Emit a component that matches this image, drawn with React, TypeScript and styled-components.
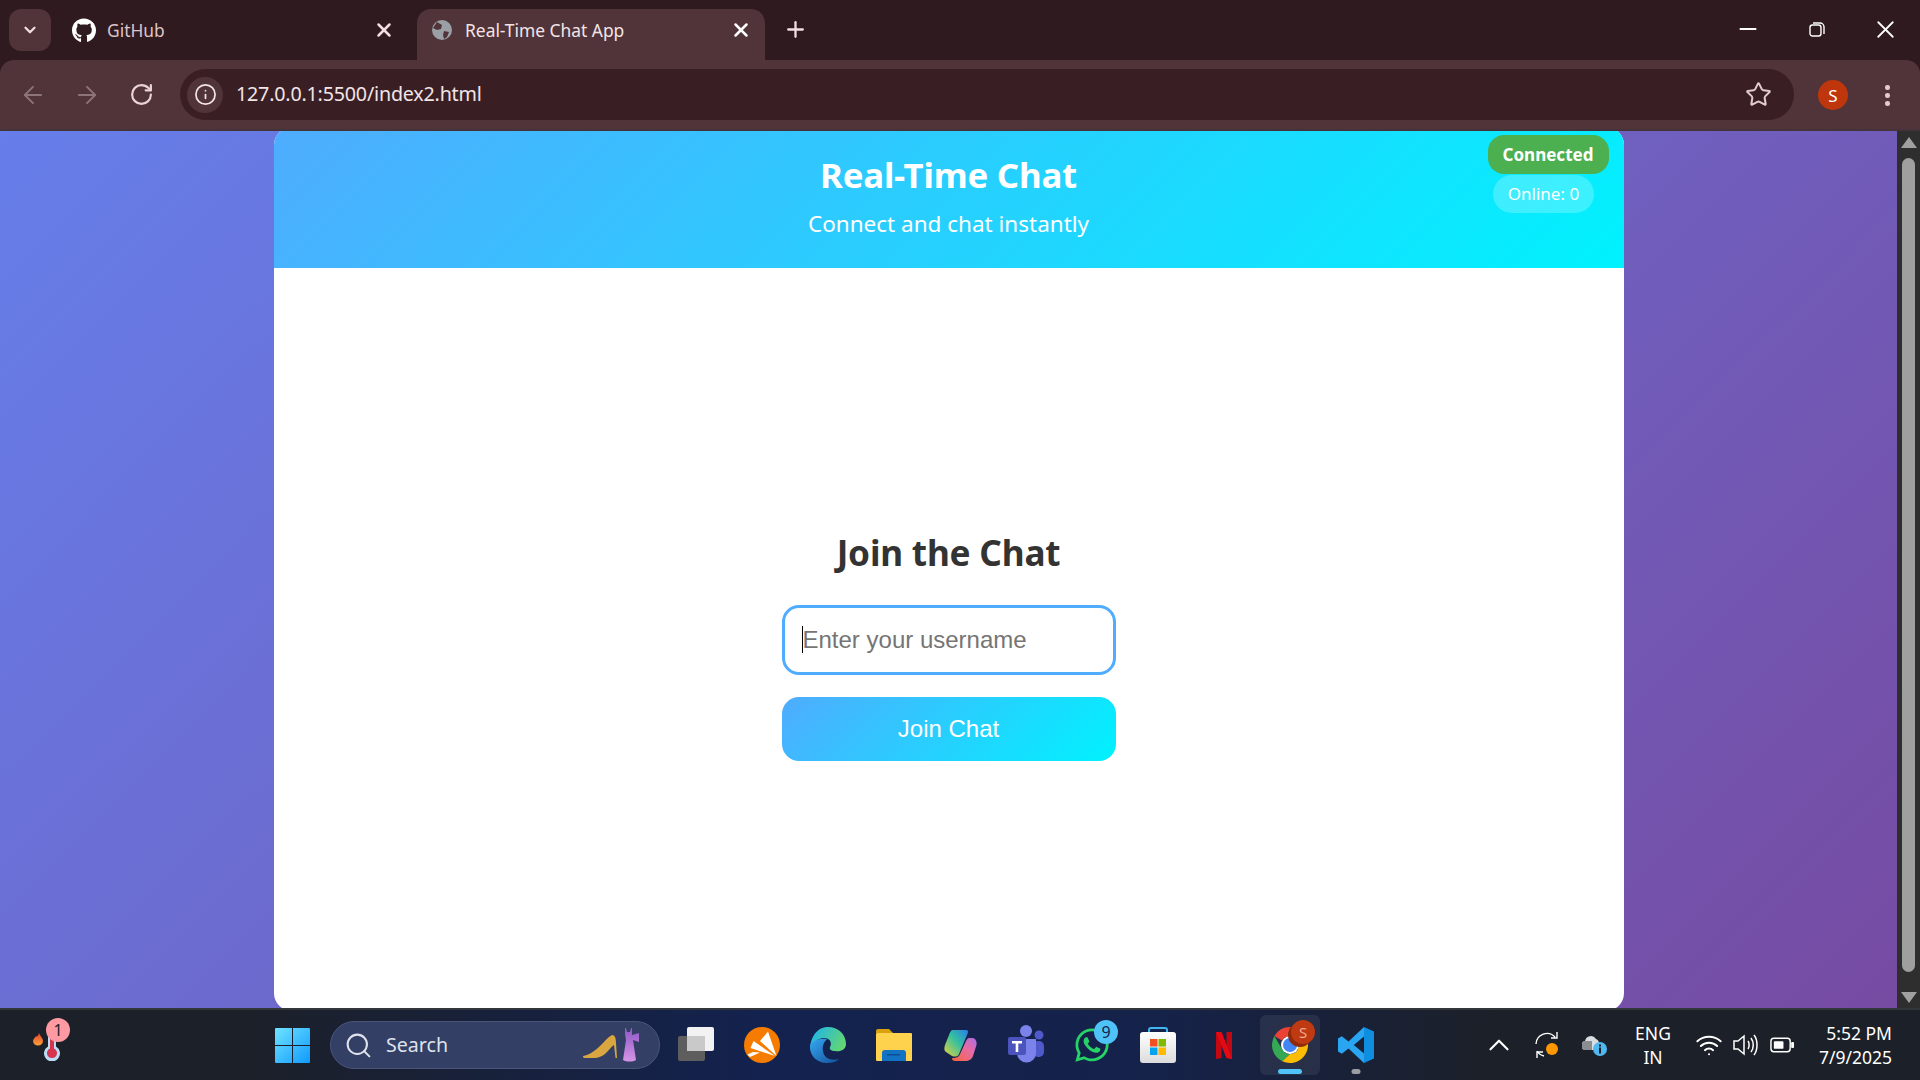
import React from "react";
import styled, { createGlobalStyle } from "styled-components";
import { ArrowLeft, ArrowRight, RotateCw, Info, Star, X, Plus, ChevronDown, ChevronUp, Search, Wifi, Minus } from "lucide-react";
import { FaGithub, FaWhatsapp } from "react-icons/fa";

const Global = createGlobalStyle`
  html, body { margin: 0; padding: 0; height: 100%; overflow: hidden; }
  body { font-family: "Noto Sans", "Open Sans", sans-serif; }
  * { box-sizing: border-box; }
`;

const Screen = styled.div`
  width: 1920px; height: 1080px; display: flex; flex-direction: column; overflow: hidden;
`;

/* Browser chrome */
const Chrome = styled.header`
  height: 131px; flex: none; background: #2f1a1f; display: flex; flex-direction: column;
`;
const TabStrip = styled.div`
  height: 60px; flex: none; display: flex; align-items: flex-start; padding: 9px 0 0 9px; position: relative;
`;
const TabSearch = styled.div`
  width: 42px; height: 42px; border-radius: 12px; background: #50343a; color: #f1dfe2;
  display: flex; align-items: center; justify-content: center; margin-right: 9px;
`;
const Tab = styled.div<{ $active?: boolean }>`
  width: ${p => (p.$active ? "348px" : "357px")}; height: 51px; display: flex; align-items: center;
  padding: 0 ${p => (p.$active ? "13px" : "22px")} 9px ${p => (p.$active ? "13px" : "12px")};
  font-size: 17.4px; position: relative;
  color: ${p => (p.$active ? "#f3e4e6" : "#dcc4c8")};
  background: ${p => (p.$active ? "#50343a" : "transparent")};
  border-radius: 14px 14px 0 0;
`;
const TabIcon = styled.span`
  width: 24px; height: 24px; margin-right: 11px; display: flex; align-items: center; justify-content: center; flex: none;
`;
const TabTitle = styled.span`flex: 1; white-space: nowrap;`;
const NewTab = styled.div`
  width: 40px; height: 40px; margin: 0 0 0 10px; color: #f1dfe2; display: flex; align-items: center; justify-content: center;
`;
const WindowControls = styled.div`
  margin-left: auto; display: flex; color: #fff; height: 42px; margin-top: -9px;
`;
const WindowButton = styled.div`
  width: 69px; height: 60px; display: flex; align-items: center; justify-content: center; padding-bottom: 2px;
`;
const Toolbar = styled.div`
  height: 71px; flex: none; background: #50343a; border-radius: 14px 14px 0 0; display: flex; align-items: flex-start;
  padding: 9px 0 0 17px; border-bottom: 2px solid #45333a;
`;
const NavButton = styled.div<{ $dim?: boolean }>`
  width: 32px; height: 51px; margin-right: 22px; display: flex; align-items: center; justify-content: center;
  color: ${p => (p.$dim ? "#8d7478" : "#e9d3d6")};
`;
const AddressBar = styled.div`
  width: 1614px; height: 51px; margin-left: 1px; border-radius: 26px; background: #391f24; display: flex; align-items: center; padding: 0 8px 0 7px;
`;
const InfoChip = styled.div`
  width: 36px; height: 36px; border-radius: 50%; background: #50343a; color: #f3e4e6; display: flex; align-items: center; justify-content: center; margin-right: 13px;
`;
const Url = styled.div`
  flex: 1; color: #f3e4e6; font-size: 19.7px; letter-spacing: -0.2px; padding-bottom: 2px;
`;
const StarSlot = styled.div`
  width: 34px; display: flex; justify-content: center; color: #e0cbce; margin-right: 11px;
`;
const Avatar = styled.div`
  width: 30px; height: 30px; border-radius: 50%; background: #bf360c; color: #fff; font-size: 17px;
  display: flex; align-items: center; justify-content: center; margin: 11px 0 0 24px;
`;
const MenuDots = styled.div`
  width: 6px; margin: 16px 0 0 37px; display: flex; flex-direction: column; gap: 3.5px;
`;
const Dot = styled.span`width: 4.5px; height: 4.5px; border-radius: 50%; background: #e6c9cf;`;

/* Viewport */
const Viewport = styled.div`
  flex: 1; min-height: 0; display: flex;
`;
const Page = styled.main`
  flex: 1; overflow: hidden; background: linear-gradient(135deg, #667eea 0%, #764ba2 100%); display: flex; justify-content: center; align-items: flex-start;
`;
const Card = styled.section`
  width: 1350px; height: 884px; margin-top: -4px; flex: none; background: #fff; border-radius: 18px; overflow: hidden; display: flex; flex-direction: column;
`;
const CardHeader = styled.div`
  height: 141px; flex: none; position: relative; color: #fff; text-align: center;
  background: linear-gradient(135deg, #4facfe 0%, #00f2fe 100%); padding-top: 27px;
`;
const Title = styled.h1`
  margin: 0; font-size: 34.8px; line-height: 42px; font-weight: 700; letter-spacing: -0.2px;
`;
const Subtitle = styled.p`
  margin: 12px 0 0; font-size: 22.5px; line-height: 32px; letter-spacing: 0;
`;
const StatusStack = styled.div`
  position: absolute; right: 15px; top: 8px; display: flex; flex-direction: column; align-items: center; gap: 1px;
`;
const ConnectedPill = styled.div`
  width: 121px; height: 39px; border-radius: 16px; background: #4caf50; color: #fff; font-weight: 700; font-size: 17px;
  display: flex; align-items: center; justify-content: center;
`;
const OnlinePill = styled.div`
  width: 101px; height: 38px; border-radius: 19px; background: rgba(255,255,255,.22); color: #fff; font-size: 17px;
  display: flex; align-items: center; justify-content: center; margin-right: 9px; padding-bottom: 1px;
`;
const JoinBody = styled.div`
  flex: 1; display: flex; flex-direction: column; align-items: center; padding-top: 260px;
`;
const JoinTitle = styled.h2`
  margin: 0 0 28px; font-size: 35.2px; line-height: 49px; font-weight: 700; color: #333; letter-spacing: -0.2px;
`;
const InputWrap = styled.div`
  position: relative; width: 334px; height: 70px; margin-bottom: 22px;
`;
const UserInput = styled.input`
  width: 100%; height: 100%; border: 3px solid #4facfe; border-radius: 17px; outline: none; padding: 0 18px;
  font-family: "Liberation Sans", Arial, sans-serif; font-size: 24px; background: #fff; caret-color: transparent;
  &::placeholder { color: #757575; opacity: 1; }
`;
const Caret = styled.span`
  position: absolute; left: 20px; top: 21px; width: 1px; height: 27px; background: #000;
`;
const JoinButton = styled.button`
  width: 334px; height: 64px; border: 0; border-radius: 17px; color: #fff;
  font-family: "Liberation Sans", Arial, sans-serif; font-size: 24px;
  background: linear-gradient(135deg, #4facfe 0%, #00f2fe 100%);
`;
const Scrollbar = styled.aside`
  width: 23px; flex: none; background: #2e2e2e; display: flex; flex-direction: column; align-items: center; padding: 6px 0 5px;
`;
const ScrollArrow = styled.span<{ $down?: boolean }>`
  width: 0; height: 0; border-left: 8px solid transparent; border-right: 8px solid transparent;
  ${p => (p.$down ? "border-top: 11px solid #a0a0a0; margin-top: 20px;" : "border-bottom: 11px solid #a0a0a0; margin-bottom: 10px;")}
`;
const ScrollThumb = styled.div`
  width: 13px; flex: 1; border-radius: 7px; background: #9f9f9f;
`;

/* Taskbar */
const Taskbar = styled.footer`
  height: 72px; flex: none; position: relative; display: flex; align-items: center; border-top: 2px solid #33363b;
  background: linear-gradient(90deg, #1c2028 0%, #1c2028 12%, #13224f 40%, #15224a 60%, #1c2028 78%, #1c2028 100%);
`;
const Widget = styled.div`
  width: 275px; flex: none; height: 70px; position: relative; padding: 0 0 0 33px; display: flex; align-items: center;
`;
const WidgetBadge = styled.span`
  position: absolute; left: 46px; top: 8px; width: 24px; height: 24px; border-radius: 50%; background: #ff9aa2; color: #222;
  font-size: 16px; display: flex; align-items: center; justify-content: center;
`;
const StartButton = styled.div`
  width: 35px; height: 35px; margin-right: 20px; flex: none;
`;
const SearchBox = styled.div`
  width: 330px; height: 48px; flex: none; border-radius: 24px; background: #343f66; border: 1px solid #4a5478; color: #dfe3ec;
  display: flex; align-items: center; padding: 0 19px 0 13px; font-size: 19.6px;
`;
const SearchText = styled.span`margin-left: 13px; flex: 1; padding-bottom: 2px;`;
const ShoeSlot = styled.span`
  display: flex; margin-right: 5px; padding-top: 2px;
`;
const AppRow = styled.div`
  display: flex; margin-left: 3px; height: 70px; align-items: center;
`;
const AppSlot = styled.div<{ $active?: boolean }>`
  width: 66px; height: 60px; position: relative; display: flex; align-items: center; justify-content: center;
  border-radius: 6px; ${p => p.$active && "background: rgba(255,255,255,.07); width: 60px; margin: 0 3px;"}
`;
const WhatsBadge = styled.span`
  position: absolute; right: 7px; top: 5px; width: 24px; height: 24px; border-radius: 50%; font-size: 16px;
  display: flex; align-items: center; justify-content: center; background: #4fc3f7; color: #15224a;
`;
const ChromeBadge = styled.span`
  position: absolute; right: 5px; top: 5px; width: 24px; height: 24px; border-radius: 50%; font-size: 15px;
  display: flex; align-items: center; justify-content: center; background: #bf3a12; color: #f2ab94;
  box-shadow: -3px 3px 0 #8e2a0a;
`;
const RunMark = styled.span<{ $wide?: boolean }>`
  position: absolute; bottom: 1px; left: 50%; transform: translateX(-50%); height: 5px; border-radius: 3px;
  width: ${p => (p.$wide ? "24px" : "9px")}; background: ${p => (p.$wide ? "#4fc3f7" : "#9a9da3")};
`;
const Tray = styled.div`
  position: absolute; right: 28px; top: 0; height: 70px; display: flex; align-items: center; color: #fff;
`;
const TraySlot = styled.div<{ $w: number; $gap?: number }>`
  width: ${p => p.$w}px; margin-left: ${p => p.$gap ?? 0}px; display: flex; justify-content: center; align-items: center; position: relative;
`;
const Lang = styled.div`
  width: 60px; text-align: center; font-size: 17.5px; line-height: 24px; margin: 0 9.5px 0 11px;
`;
const Clock = styled.div`
  width: 92px; text-align: right; font-size: 17.5px; line-height: 24px; margin-left: 2px;
`;

const Globe = () => (
  <svg width="22" height="22" viewBox="0 0 22 22">
    <circle cx="11" cy="11" r="10" fill="#9aa0a6" />
    <path d="M6 3l5 3-1 4-4 1-4-2zM13 12l5 1-2 5-3 2-1-4z" fill="#50343a" />
  </svg>
);
const WinLogo = () => (
  <StartButton>
    <svg width="35" height="35" viewBox="0 0 35 35">
      <defs>
        <linearGradient id="win" x1="0" y1="0" x2="1" y2="1">
          <stop offset="0" stopColor="#6fe3ff" />
          <stop offset="1" stopColor="#0f9aff" />
        </linearGradient>
      </defs>
      <path d="M1 0h16v17H0V1a1 1 0 011-1zM18 0h16a1 1 0 011 1v16H18zM0 18h17v17H1a1 1 0 01-1-1zM18 18h17v16a1 1 0 01-1 1H18z" fill="url(#win)" />
    </svg>
  </StartButton>
);
const Thermo = () => (
  <svg width="30" height="32" viewBox="0 0 30 32">
    <defs>
      <linearGradient id="flm" x1="0" y1="0" x2="0" y2="1">
        <stop offset="0" stopColor="#e8432c" />
        <stop offset="1" stopColor="#f9a13a" />
      </linearGradient>
    </defs>
    <path d="M6 4c1 3 4 5 4 8a5 4.500 0 01-10 0c0-2 2-3 3-5 1 1 1.500 1 3-3z" fill="url(#flm)" />
    <path d="M15 4h8v13.500a8 8 0 11-8 0z" fill="#bcdcf5" />
    <path d="M17 4h4v15.500a5 5 0 11-4 0z" fill="#d6334e" />
  </svg>
);
const Shoe = () => (
  <ShoeSlot>
    <svg width="34" height="23" viewBox="0 0 34 23">
      <path d="M0 21C6 20 12 16 17 11 21 7 25 2 29 0c3 0 4 3 4 8l1 15h-1.500L31 10c-2 1-4 4-7 7-4 4-8 6-14 6H2c-2 0-2-1-2-2z" fill="#d9a63f" />
    </svg>
  </ShoeSlot>
);
const Dress = () => (
  <svg width="18" height="35" viewBox="0 0 18 35">
    <defs>
      <linearGradient id="drs" x1="0" y1="0" x2="0" y2="1">
        <stop offset="0" stopColor="#8f58c8" />
        <stop offset="1" stopColor="#d595e6" />
      </linearGradient>
    </defs>
    <path d="M3 0h1l1 4h3l1-4h1v7l7-2v9l-6-2 3 20c-3 2-10 2-13 0l3-20-1-6z" fill="url(#drs)" />
  </svg>
);
const TaskView = () => (
  <svg width="36" height="36" viewBox="0 0 36 36">
    <rect x="0" y="9" width="27" height="25" rx="2" fill="#5e5e5e" />
    <rect x="9" y="0" width="27" height="24" rx="2" fill="#f2f2f2" />
    <rect x="9" y="9" width="18" height="15" fill="#c9c9c9" />
  </svg>
);
const SublimeLike = () => (
  <svg width="36" height="36" viewBox="0 0 36 36">
    <circle cx="18" cy="18" r="18" fill="#f57c00" />
    <path d="M24 4.500L16 14 32.500 29zM9.500 14L6.500 21 31 29zM3.500 27.500L6 30 16 25.500 9 25z" fill="#fff" />
  </svg>
);
const Edge = () => (
  <svg width="36" height="36" viewBox="0 0 36 36">
    <defs>
      <linearGradient id="edg" x1="0" y1="0" x2="1" y2="1">
        <stop offset="0" stopColor="#35a8f1" />
        <stop offset="1" stopColor="#14509c" />
      </linearGradient>
      <linearGradient id="edg2" x1="0" y1="0.3" x2="1" y2="0.7">
        <stop offset="0" stopColor="#1fb4e8" />
        <stop offset="1" stopColor="#66d86e" />
      </linearGradient>
    </defs>
    <path d="M18 0c10 0 18 7 18 17 0 6-6 8-11 7-4 0-6-2-5-4 2-3 1-9-6-9-6 0-13 5-14 13C0 10 7 0 18 0z" fill="url(#edg2)" />
    <path d="M0 20c0 9 7 16 17 16 5 0 9-1 12-4-7 2-15 0-16-8-1-5 1-9 4-12-8-1-17 2-17 8z" fill="url(#edg)" />
  </svg>
);
const Folder = () => (
  <svg width="36" height="32" viewBox="0 0 36 32">
    <path d="M0 2a2 2 0 012-2h11l4 4H0z" fill="#d8a10e" />
    <rect y="4" width="36" height="28" rx="1" fill="#ffd24d" />
    <path d="M6 32V24a3 3 0 013-3h18a3 3 0 013 3v8z" fill="#1273c4" />
    <rect x="11" y="25" width="13" height="1.500" fill="#0d4f8f" />
  </svg>
);
const Copilot = () => (
  <svg width="33" height="31" viewBox="0 0 33 31">
    <defs>
      <linearGradient id="cpa" x1="0" y1="1" x2="1" y2="0">
        <stop offset="0" stopColor="#e8d23a" />
        <stop offset="0.55" stopColor="#34c0a0" />
        <stop offset="1" stopColor="#2b7de9" />
      </linearGradient>
      <linearGradient id="cpb" x1="0" y1="1" x2="1" y2="0">
        <stop offset="0" stopColor="#f4663a" />
        <stop offset="0.6" stopColor="#e86aa5" />
        <stop offset="1" stopColor="#a86de5" />
      </linearGradient>
    </defs>
    <path d="M9 0h13c3 0 2 3 1 5l-8 19c-1 3-5 3-7 2l-6-4c-2-1-2-4-1-7L5 5c1-3 2-5 4-5z" fill="url(#cpa)" />
    <path d="M25 8h4c3 1 4 4 3.500 7L29 26c-1 3-4 5-8 5H11c-2 0-3-1-3-3 5 0 7-1 8.500-5L22 11c1-2 2-3 3-3z" fill="url(#cpb)" />
  </svg>
);
const Teams = () => (
  <svg width="36" height="40" viewBox="0 0 36 40">
    <circle cx="18" cy="6" r="6" fill="#7b83eb" />
    <circle cx="31" cy="10" r="4.500" fill="#5059c9" />
    <rect x="25" y="16" width="11" height="16" rx="5" fill="#5059c9" />
    <path d="M9 14h19v14a9.500 9.500 0 01-19 0z" fill="#7b83eb" />
    <rect x="0" y="12" width="18" height="18" rx="2" fill="#4b53bc" />
    <path d="M4 16h10v2.500h-3.700V27H7.700v-8.500H4z" fill="#fff" />
  </svg>
);
const Store = () => (
  <svg width="36" height="36" viewBox="0 0 36 36">
    <defs>
      <linearGradient id="sto" x1="0" y1="0" x2="0" y2="1">
        <stop offset="0" stopColor="#ffffff" />
        <stop offset="1" stopColor="#dcdcdc" />
      </linearGradient>
    </defs>
    <path d="M9 7V3a2 2 0 012-2h14a2 2 0 012 2v4" fill="none" stroke="#3fb6ef" strokeWidth="2" />
    <rect y="5" width="36" height="31" rx="3" fill="url(#sto)" />
    <rect x="10" y="12" width="7.500" height="7.500" fill="#f25022" />
    <rect x="18.500" y="12" width="7.500" height="7.500" fill="#7fba00" />
    <rect x="10" y="20.500" width="7.500" height="7.500" fill="#00a4ef" />
    <rect x="18.500" y="20.500" width="7.500" height="7.500" fill="#ffb900" />
  </svg>
);
const Netflix = () => (
  <svg width="16" height="27" viewBox="0 0 16 27">
    <path d="M0 0h5.500l5 14V0H16v27l-5.500-1-5-14v14L0 27z" fill="#c40812" />
    <path d="M0 0h5.500L16 27l-5.500-1z" fill="#e50914" />
  </svg>
);
const ChromeLogo = () => (
  <svg width="36" height="36" viewBox="0 0 36 36">
    <path d="M18 0a18 18 0 0115.600 9H18A9 9 0 0010 13.500L2.400 9A18 18 0 0118 0z" fill="#ea4335" />
    <path d="M2.400 9l7.800 13.500A9 9 0 0018 27l-7.800 7.200A18 18 0 012.400 9z" fill="#34a853" />
    <path d="M33.600 9A18 18 0 0110.200 34.200L18 27a9 9 0 007.800-13.500L33.600 9z" fill="#fbbc04" />
    <circle cx="18" cy="18" r="9" fill="#fff" />
    <circle cx="18" cy="18" r="7" fill="#4285f4" />
  </svg>
);
const VSCode = () => (
  <svg width="36" height="36" viewBox="0 0 36 36">
    <path d="M26 0L10.500 14.500 3.800 9.200 0 11.500v13l3.800 2.300 6.700-5.300L26 36V26.500L15.800 18 26 9.500z" fill="#2aa5f2" />
    <path d="M26 0l10 4.500v27L26 36z" fill="#0f8ee0" />
  </svg>
);
const SyncIcon = () => (
  <svg width="26" height="28" viewBox="0 0 26 28">
    <path d="M2 13a11 11 0 0119-7M23 1v6h-6M3 27v-6h6M3 20a11 11 0 007 5" fill="none" stroke="#fff" strokeWidth="1.400" />
    <circle cx="18" cy="18" r="6" fill="#ff9800" />
  </svg>
);
const CloudInfo = () => (
  <svg width="26" height="24" viewBox="0 0 26 24">
    <path d="M4 17a4.500 4.500 0 01-1-9 6 6 0 0111-2 5 5 0 013 5v6z" fill="#d9dce0" />
    <path d="M4 17a4.500 4.500 0 01-1-9h7v9z" fill="#8a8d92" />
    <circle cx="18" cy="16" r="7" fill="#4fb8f0" />
    <rect x="17" y="14.500" width="2" height="6" fill="#1c2028" />
    <rect x="17" y="11.500" width="2" height="2" fill="#1c2028" />
  </svg>
);
const Speaker = () => (
  <svg width="26" height="24" viewBox="0 0 26 24">
    <path d="M2 8h4l6-5v18l-6-5H2z M16 8c1.500 2 1.500 6 0 8M19 5c3 4 3 10 0 14M22 2c4 5 4 15 0 20" fill="none" stroke="#fff" strokeWidth="1.500" />
  </svg>
);
const BatteryIcon = () => (
  <svg width="25" height="18" viewBox="0 0 26 18">
    <rect x="1" y="2" width="20" height="14" rx="3" fill="none" stroke="#fff" strokeWidth="1.500" />
    <rect x="4" y="5" width="10" height="8" rx="1" fill="#fff" />
    <rect x="22" y="6" width="3" height="6" rx="1" fill="#fff" />
  </svg>
);
const RestoreIcon = () => (
  <svg width="16" height="16" viewBox="0 0 16 16">
    <rect x="1" y="4" width="11" height="11" rx="2.500" fill="none" stroke="#fff" strokeWidth="1.400" />
    <path d="M4 2h7a4 4 0 014 4v7" fill="none" stroke="#fff" strokeWidth="1.400" />
  </svg>
);

export default function App() {
  return (
    <Screen>
      <Global />
      <Chrome>
        <TabStrip>
          <TabSearch><ChevronDown size={18} strokeWidth={3} /></TabSearch>
          <Tab>
            <TabIcon><FaGithub size={25} color="#fff" /></TabIcon>
            <TabTitle>GitHub</TabTitle>
            <X size={22} strokeWidth={2.7} color="#f1dfe2" />
          </Tab>
          <Tab $active>
            <TabIcon><Globe /></TabIcon>
            <TabTitle>Real-Time Chat App</TabTitle>
            <X size={22} strokeWidth={2.7} color="#fff" />
          </Tab>
          <NewTab><Plus size={25} strokeWidth={2.2} /></NewTab>
          <WindowControls>
            <WindowButton><Minus size={26} strokeWidth={1.8} /></WindowButton>
            <WindowButton><RestoreIcon /></WindowButton>
            <WindowButton><X size={29} strokeWidth={1.5} /></WindowButton>
          </WindowControls>
        </TabStrip>
        <Toolbar>
          <NavButton $dim><ArrowLeft size={28} strokeWidth={1.6} /></NavButton>
          <NavButton $dim><ArrowRight size={28} strokeWidth={1.6} /></NavButton>
          <NavButton><RotateCw size={25} strokeWidth={2.1} /></NavButton>
          <AddressBar>
            <InfoChip><Info size={23} strokeWidth={1.8} /></InfoChip>
            <Url>127.0.0.1:5500/index2.html</Url>
            <StarSlot><Star size={27} strokeWidth={1.8} /></StarSlot>
          </AddressBar>
          <Avatar>S</Avatar>
          <MenuDots><Dot /><Dot /><Dot /></MenuDots>
        </Toolbar>
      </Chrome>

      <Viewport>
        <Page>
          <Card>
            <CardHeader>
              <Title>Real-Time Chat</Title>
              <Subtitle>Connect and chat instantly</Subtitle>
              <StatusStack>
                <ConnectedPill>Connected</ConnectedPill>
                <OnlinePill>Online: 0</OnlinePill>
              </StatusStack>
            </CardHeader>
            <JoinBody>
              <JoinTitle>Join the Chat</JoinTitle>
              <InputWrap>
                <UserInput placeholder="Enter your username" readOnly />
                <Caret />
              </InputWrap>
              <JoinButton>Join Chat</JoinButton>
            </JoinBody>
          </Card>
        </Page>
        <Scrollbar>
          <ScrollArrow />
          <ScrollThumb />
          <ScrollArrow $down />
        </Scrollbar>
      </Viewport>

      <Taskbar>
        <Widget>
          <Thermo />
          <WidgetBadge>1</WidgetBadge>
        </Widget>
        <WinLogo />
        <SearchBox>
          <Search size={29} strokeWidth={1.7} />
          <SearchText>Search</SearchText>
          <Shoe />
          <Dress />
        </SearchBox>
        <AppRow>
          <AppSlot><TaskView /></AppSlot>
          <AppSlot><SublimeLike /></AppSlot>
          <AppSlot><Edge /></AppSlot>
          <AppSlot><Folder /></AppSlot>
          <AppSlot><Copilot /></AppSlot>
          <AppSlot><Teams /></AppSlot>
          <AppSlot>
            <FaWhatsapp size={38} color="#25d366" />
            <WhatsBadge>9</WhatsBadge>
          </AppSlot>
          <AppSlot><Store /></AppSlot>
          <AppSlot><Netflix /></AppSlot>
          <AppSlot $active>
            <ChromeLogo />
            <ChromeBadge>S</ChromeBadge>
            <RunMark $wide />
          </AppSlot>
          <AppSlot>
            <VSCode />
            <RunMark />
          </AppSlot>
        </AppRow>
        <Tray>
          <TraySlot $w={34}><ChevronUp size={34} strokeWidth={1.5} /></TraySlot>
          <TraySlot $w={34} $gap={14}><SyncIcon /></TraySlot>
          <TraySlot $w={34} $gap={14}><CloudInfo /></TraySlot>
          <Lang>ENG<br />IN</Lang>
          <TraySlot $w={32}><Wifi size={28} strokeWidth={1.7} /></TraySlot>
          <TraySlot $w={32} $gap={4.5}><Speaker /></TraySlot>
          <TraySlot $w={32} $gap={5}><BatteryIcon /></TraySlot>
          <Clock>5:52 PM<br />7/9/2025</Clock>
        </Tray>
      </Taskbar>
    </Screen>
  );
}
